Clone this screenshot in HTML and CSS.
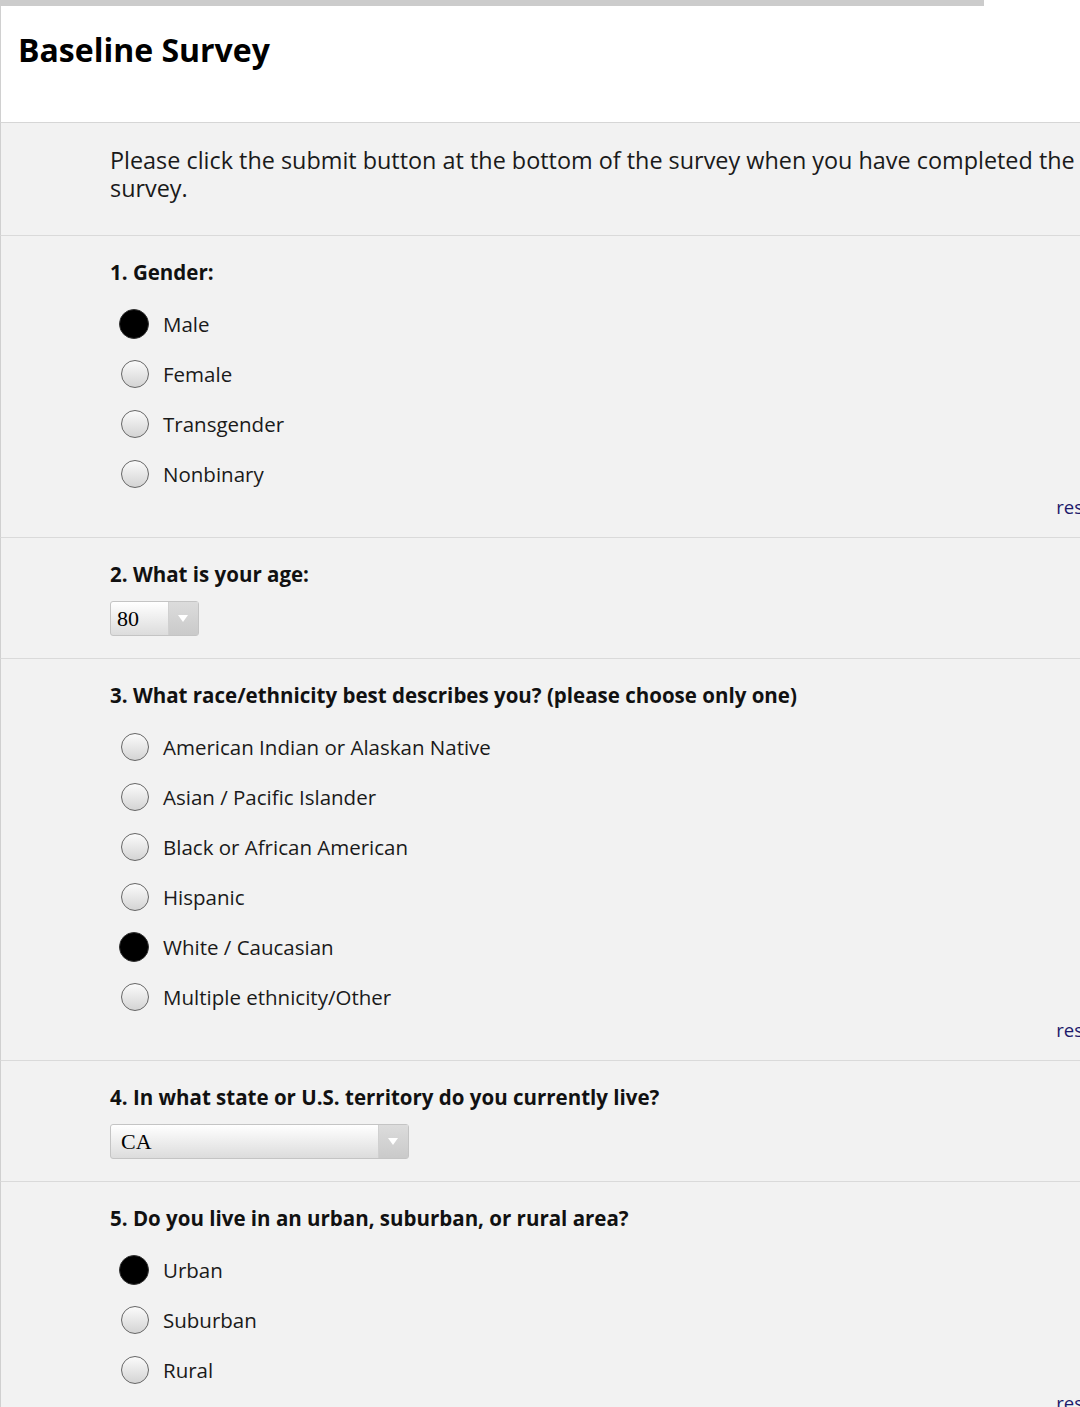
FILE: index.html
```html
<!DOCTYPE html>
<html>
<head>
<meta charset="utf-8">
<link rel="stylesheet" href="styles.css">
</head>
<body>
<div class="page">
  <div class="progress"></div>
  <header class="header">
    <h1 class="title">Baseline Survey</h1>
  </header>
  <section class="block intro">
    <p class="intro-text">Please click the submit button at the bottom of the survey when you have completed the survey.</p>
  </section>

  <section class="block question">
    <h2 class="q-title">1. Gender:</h2>
    <ul class="options">
      <li class="option"><span class="radio checked"></span><span class="label">Male</span></li>
      <li class="option"><span class="radio"></span><span class="label">Female</span></li>
      <li class="option"><span class="radio"></span><span class="label">Transgender</span></li>
      <li class="option"><span class="radio"></span><span class="label">Nonbinary</span></li>
    </ul>
    <div class="reset-row"><a class="reset">reset</a></div>
  </section>

  <section class="block question single">
    <h2 class="q-title">2. What is your age:</h2>
    <div class="select small"><span class="select-value">80</span><span class="select-arrow"></span></div>
  </section>

  <section class="block question">
    <h2 class="q-title">3. What race/ethnicity best describes you? (please choose only one)</h2>
    <ul class="options">
      <li class="option"><span class="radio"></span><span class="label">American Indian or Alaskan Native</span></li>
      <li class="option"><span class="radio"></span><span class="label">Asian / Pacific Islander</span></li>
      <li class="option"><span class="radio"></span><span class="label">Black or African American</span></li>
      <li class="option"><span class="radio"></span><span class="label">Hispanic</span></li>
      <li class="option"><span class="radio checked"></span><span class="label">White / Caucasian</span></li>
      <li class="option"><span class="radio"></span><span class="label">Multiple ethnicity/Other</span></li>
    </ul>
    <div class="reset-row"><a class="reset">reset</a></div>
  </section>

  <section class="block question single">
    <h2 class="q-title">4. In what state or U.S. territory do you currently live?</h2>
    <div class="select wide"><span class="select-value">CA</span><span class="select-arrow"></span></div>
  </section>

  <section class="block question">
    <h2 class="q-title">5. Do you live in an urban, suburban, or rural area?</h2>
    <ul class="options">
      <li class="option"><span class="radio checked"></span><span class="label">Urban</span></li>
      <li class="option"><span class="radio"></span><span class="label">Suburban</span></li>
      <li class="option"><span class="radio"></span><span class="label">Rural</span></li>
    </ul>
    <div class="reset-row"><a class="reset">reset</a></div>
  </section>
</div>
</body>
</html>
```
FILE: styles.css
```css
html, body {
  margin: 0;
  padding: 0;
  overflow: hidden;
  background: #ffffff;
}
body {
  font-family: "Open Sans", "Noto Sans", sans-serif;
  color: #1a1a1a;
}
.page {
  width: 1120px;
}
.progress {
  width: 984px;
  height: 6px;
  background: #cccccc;
}
.header {
  height: 117px;
  border-left: 1px solid #d0d0d0;
  border-bottom: 1px solid #d6d6d6;
  background: #ffffff;
  box-sizing: border-box;
}
.title {
  margin: 0;
  padding: 24px 0 0 17px;
  font-size: 32px;
  line-height: 40px;
  font-weight: 700;
  color: #000;
}
.block {
  background: #f2f2f2;
  border-left: 1px solid #d0d0d0;
  border-bottom: 1px solid #dadada;
  padding: 0 20px 0 109px;
}
.intro {
  height: 113px;
  box-sizing: border-box;
  padding-top: 23px;
}
.intro-text {
  margin: 0;
  max-width: 980px;
  font-size: 23.4px;
  line-height: 28px;
  color: #1a1a1a;
}
.question {
  padding-top: 22px;
}
.q-title {
  margin: 0;
  font-size: 20.5px;
  line-height: 28px;
  font-weight: 700;
  color: #111;
}
.options {
  list-style: none;
  margin: 13px 0 0 0;
  padding: 0;
}
.option {
  height: 50px;
  display: flex;
  align-items: center;
}
.radio {
  width: 28px;
  height: 28px;
  margin-left: 11px;
  border-radius: 50%;
  border: 1.5px solid #666;
  background: linear-gradient(#fbfbfb, #d4d4d4);
  box-sizing: border-box;
  flex: none;
}
.radio.checked {
  width: 30px;
  height: 30px;
  margin-left: 9px;
  margin-right: 0;
  border: 1px solid #333;
  background: #000;
}
.label {
  margin-left: 14px;
  font-size: 20.5px;
  color: #1a1a1a;
}
.reset-row {
  text-align: right;
  margin-top: -4px;
  height: 24px;
  line-height: 24px;
  padding-bottom: 18px;
}
.reset {
  font-size: 18.5px;
  color: #1d1a6b;
}
.single {
  padding-bottom: 22px;
}
.select {
  margin-top: 13px;
  height: 35px;
  box-sizing: border-box;
  border: 1px solid #c4c4c4;
  border-radius: 3px;
  background: linear-gradient(#ffffff, #dcdcdc);
  display: flex;
  align-items: center;
  justify-content: space-between;
}
.select.small { width: 89px; }
.select.wide { width: 299px; }
.select-value {
  font-family: "Liberation Serif", "Times New Roman", serif;
  font-size: 22px;
  color: #000;
  padding-left: 6px;
}
.select.wide .select-value { padding-left: 10px; }
.select-arrow {
  align-self: stretch;
  width: 29px;
  border-left: 1px solid #d0d0d0;
  background: linear-gradient(#dcdcdc, #cacaca);
  position: relative;
}
.select-arrow::after {
  content: "";
  position: absolute;
  left: 9px;
  top: 13px;
  border-left: 5px solid transparent;
  border-right: 5px solid transparent;
  border-top: 7px solid #ffffff;
}
```
